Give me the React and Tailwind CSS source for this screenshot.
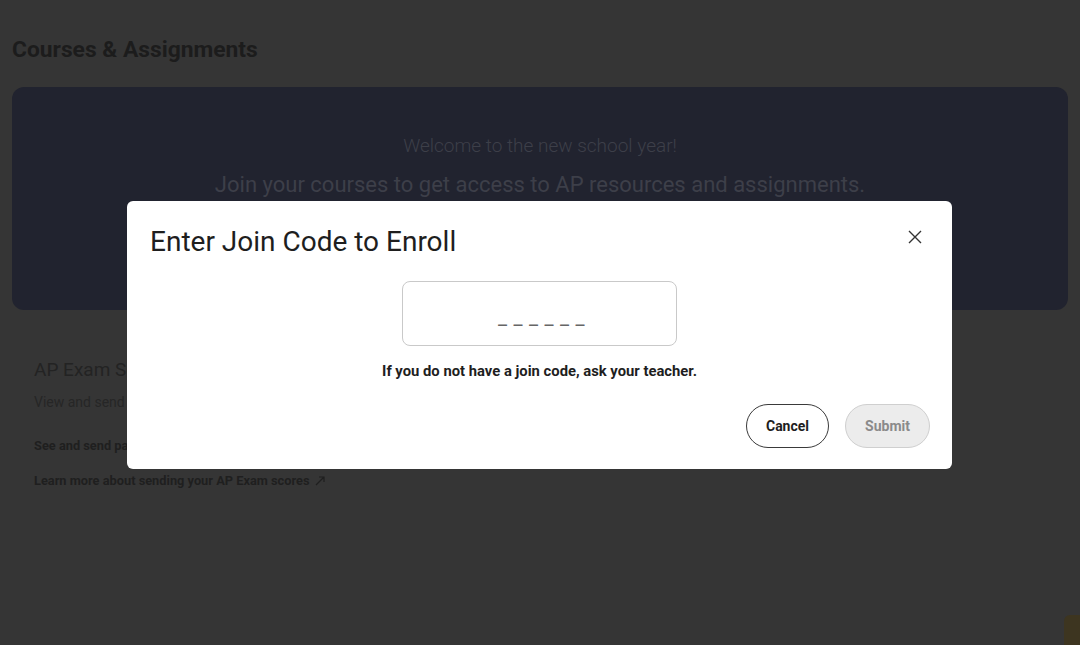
import React from "react";

const font = { fontFamily: "Roboto, 'Noto Sans', Arial, sans-serif" };

export default function App() {
  return (
    <div className="relative w-[1080px] h-[645px] overflow-hidden bg-[#353535]" style={font}>
      {/* dimmed page behind the dialog */}
      <div className="px-3 pt-[36px]">
        <h1 className="text-[22.8px] leading-[28px] font-bold text-[#1c1c1c]">Courses &amp; Assignments</h1>
        <div className="mt-[23px] h-[223px] rounded-xl bg-[#21232f] flex flex-col items-center pt-[45px]">
          <p className="text-[19px] leading-[28px] font-light text-[#3d3f49]">Welcome to the new school year!</p>
          <p className="mt-[10px] text-[22px] leading-[30px] text-[#3d3f49]">Join your courses to get access to AP resources and assignments.</p>
        </div>
        <div className="px-[22px] pt-[48px]">
          <h2 className="text-[19px] leading-[24px] text-[#232323]">AP Exam Scores</h2>
          <p className="mt-[10px] text-[14px] leading-[20px] text-[#262626]">View and send your AP Exam scores</p>
          <p className="mt-[26px] text-[12.8px] leading-[16px] font-bold text-[#1f1f1f]">See and send past scores</p>
          <p className="mt-[19px] text-[12.8px] leading-[16px] font-bold text-[#1f1f1f] flex items-center gap-1">
            Learn more about sending your AP Exam scores
            <svg width="12" height="12" viewBox="0 0 12 12" fill="none" stroke="#1f1f1f" strokeWidth="1.2">
              <path d="M2 10 L10 2 M5 2 H10 V7" />
            </svg>
          </p>
        </div>
      </div>

      {/* corner widget */}
      <div className="absolute right-[-14px] bottom-[-20px] w-[30px] h-[50px] rounded-md bg-[#3d3520]" />

      {/* dialog */}
      <div className="absolute left-[127px] top-[201px] w-[825px] h-[268px] bg-white rounded-md flex flex-col">
        <div className="flex items-start justify-between pl-[23px] pr-[28px] pt-[24px]">
          <h3 className="text-[28px] leading-[34px] text-[#1e1e1e]">Enter Join Code to Enroll</h3>
          <button className="mt-[3px] w-[18px] h-[18px] flex items-center justify-center">
            <svg width="14" height="14" viewBox="0 0 14 14" fill="none" stroke="#333" strokeWidth="1.4">
              <path d="M1 1 L13 13 M13 1 L1 13" />
            </svg>
          </button>
        </div>
        <div className="flex flex-col items-center mt-[22px]">
          <div className="w-[275px] h-[65px] rounded-lg border border-[#c9c9c9] flex items-end justify-center pb-[16px]">
            <input
              className="w-full text-center outline-none bg-transparent text-[20px] leading-[24px] tracking-[6.5px] placeholder:text-[#666] pl-[10px]"
              placeholder="______"
              style={font}
            />
          </div>
          <p className="mt-[16px] text-[14.8px] leading-[18px] font-bold text-[#1e1e1e]">If you do not have a join code, ask your teacher.</p>
        </div>
        <div className="flex justify-end gap-4 pr-[22px] mt-[24px]">
          <button className="w-[83px] h-[44px] rounded-full border border-[#3a3a3a] text-[14px] font-bold text-[#1e1e1e] bg-white">Cancel</button>
          <button className="w-[85px] h-[44px] rounded-full border border-[#cfcfcf] text-[14px] font-bold text-[#8a8a8a] bg-[#ececec]">Submit</button>
        </div>
      </div>
    </div>
  );
}
